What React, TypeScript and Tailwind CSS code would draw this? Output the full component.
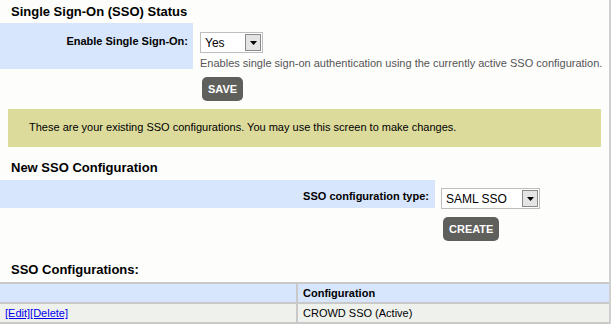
const font = "font-['Liberation_Sans',Arial,sans-serif]";

function Select({ value, width }: { value: string; width: string }) {
  return (
    <div className={`flex h-[21px] ${width} items-center border border-[#bdbdbd] bg-white pl-[4px] pr-[1px]`}>
      <span className="flex-1 text-[12px] text-black">{value}</span>
      <span className="flex h-[17px] w-[16px] items-center justify-center border border-[#8a8a8a] bg-[#e4e4e4]">
        <svg width="7" height="4" viewBox="0 0 7 4">
          <path d="M0 0h7L3.5 4z" fill="#000" />
        </svg>
      </span>
    </div>
  );
}

function Button({ label }: { label: string }) {
  return (
    <button className="h-[24px] rounded-[5px] bg-[#5f605c] px-[6px] text-[11px] font-bold text-white">
      {label}
    </button>
  );
}

export default function App() {
  return (
    <div className={`h-[324px] w-[611px] overflow-hidden border-r-2 border-[#cfcfcf] bg-[#fdfdfc] ${font}`}>
      {/* status */}
      <h2 className="pl-[11px] pt-[3px] text-[13px] font-bold leading-[18px] text-black">
        Single Sign-On (SSO) Status
      </h2>
      <div className="mt-[2px] flex">
        <div className="h-[46px] w-[193px] shrink-0 bg-[#d7e6fd] pr-[5px] pt-[10px] text-right text-[11px] font-bold text-black">
          Enable Single Sign-On:
        </div>
        <div className="pl-[7px] pt-[9px]">
          <Select value="Yes" width="w-[63px]" />
          <p className="mt-[4px] whitespace-nowrap text-[11px] leading-[13px] text-[#555]">
            Enables single sign-on authentication using the currently active SSO configuration.
          </p>
          <div className="mt-[7px] flex pl-[2px]">
            <Button label="SAVE" />
          </div>
        </div>
      </div>

      {/* info */}
      <div className="mx-[8px] mt-[8px] h-[38px] bg-[#dcdb9c] pl-[21px] pt-[12px] text-[11px] leading-[13px] text-black">
        These are your existing SSO configurations. You may use this screen to make changes.
      </div>

      {/* new config */}
      <h2 className="pl-[11px] pt-[12px] text-[13px] font-bold leading-[18px] text-black">
        New SSO Configuration
      </h2>
      <div className="mt-[3px] flex">
        <div className="h-[28px] w-[435px] shrink-0 bg-[#d7e6fd] pr-[6px] pt-[8px] text-right text-[11px] font-bold text-black">
          SSO configuration type:
        </div>
        <div className="pl-[6px] pt-[8px]">
          <Select value="SAML SSO" width="w-[99px]" />
          <div className="mt-[8px] flex pl-[2px]">
            <Button label="CREATE" />
          </div>
        </div>
      </div>

      {/* existing */}
      <h2 className="pl-[11px] pt-[20px] text-[13px] font-bold leading-[18px] text-black">
        SSO Configurations:
      </h2>
      <div className="mt-[3px] border-y-2 border-[#c9c9c9] text-[11px] leading-[18px] text-black">
        <div className="grid grid-cols-[298px_1fr] border-b-2 border-[#c9c9c9] bg-[#d7e6fd]">
          <div className="h-[18px] border-r-2 border-[#c9c9c9]" />
          <div className="pl-[5px] font-bold">Configuration</div>
        </div>
        <div className="grid grid-cols-[298px_1fr] bg-[#eff1ed]">
          <div className="h-[18px] border-r-2 border-[#c9c9c9] pl-[5px]">
            <a className="text-[#0000ee] underline" href="#">[Edit]</a>
            <a className="text-[#0000ee] underline" href="#">[Delete]</a>
          </div>
          <div className="pl-[5px]">CROWD SSO (Active)</div>
        </div>
      </div>
    </div>
  );
}
